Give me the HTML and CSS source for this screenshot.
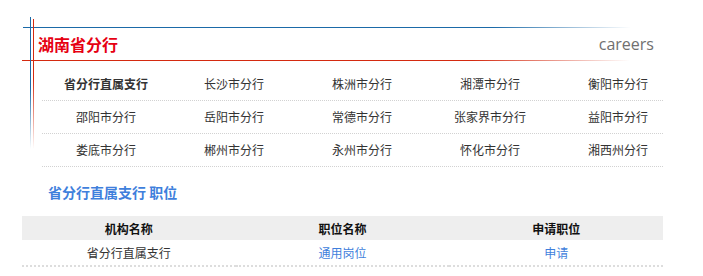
FILE: index.html
```html
<!DOCTYPE html>
<html lang="zh-CN">
<head>
  <meta charset="UTF-8" />
  <meta name="viewport" content="width=device-width, initial-scale=1.0" />
  <title>湖南省分行 – careers</title>
  <link rel="stylesheet" href="styles.css">
</head>
<body>
  <div class="wrap">
    <!-- cabecera con líneas -->
    <div class="head">
      <h1>湖南省分行</h1>
      <span class="en">careers</span>
    </div>

    <ul class="cities">
      <li class="row">
        <a href="#" class="cur">省分行直属支行</a>
        <a href="#">长沙市分行</a>
        <a href="#">株洲市分行</a>
        <a href="#">湘潭市分行</a>
        <a href="#">衡阳市分行</a>
      </li>
      <li class="row">
        <a href="#">邵阳市分行</a>
        <a href="#">岳阳市分行</a>
        <a href="#">常德市分行</a>
        <a href="#">张家界市分行</a>
        <a href="#">益阳市分行</a>
      </li>
      <li class="row">
        <a href="#">娄底市分行</a>
        <a href="#">郴州市分行</a>
        <a href="#">永州市分行</a>
        <a href="#">怀化市分行</a>
        <a href="#">湘西州分行</a>
      </li>
    </ul>

    <h2 class="sub">省分行直属支行 职位</h2>

    <table class="jobs">
      <thead>
        <tr>
          <th>机构名称</th>
          <th>职位名称</th>
          <th>申请职位</th>
        </tr>
      </thead>
      <tbody>
        <tr>
          <td>省分行直属支行</td>
          <td><a href="#">通用岗位</a></td>
          <td><a href="#">申请</a></td>
        </tr>
      </tbody>
    </table>
  </div>
</body>
</html>
```

FILE: styles.css
```css
:root {
  --rojo: #e60012;
  --azul-linea: #1b6aa8;
  --rojo-linea: #d42a10;
  --azul: #3f7fdc;
  --texto: #333;
  --punteado: #d2d2d2;
}

body {
  margin: 0;
  background: #fff;
  color: var(--texto);
  font-family: "Noto Sans CJK SC", "Open Sans", sans-serif;
  font-size: 12px;
}

a {
  color: inherit;
  text-decoration: none;
}

.wrap {
  width: 641px;
  padding-left: 22px;
}

.head {
  position: relative;
  margin-top: 27px;
  height: 34px;
  display: flex;
  align-items: center;
  justify-content: space-between;
  padding: 0 9px 0 16px;
  background:
    linear-gradient(to right, var(--azul-linea) 0, var(--azul-linea) 470px, rgba(27, 106, 168, 0) 608px) 1px 0 / 608px 1px no-repeat,
    linear-gradient(to right, var(--rojo-linea) 0, var(--rojo-linea) 450px, rgba(212, 42, 16, 0) 608px) 0 100% / 608px 1px no-repeat;
}

.head::before,
.head::after {
  content: "";
  position: absolute;
  width: 1px;
  height: 132px;
}

.head::before {
  left: 8px;
  top: -10px;
  background: linear-gradient(to bottom, var(--azul-linea) 0, var(--azul-linea) 70px, rgba(27, 106, 168, 0) 132px);
}

.head::after {
  left: 11px;
  top: -8px;
  background: linear-gradient(to bottom, var(--rojo-linea) 0, var(--rojo-linea) 60px, rgba(212, 42, 16, 0) 130px);
}

.head h1 {
  margin: 0;
  font-size: 16px;
  font-weight: bold;
  color: var(--rojo);
}

.head .en {
  font-family: "Open Sans", sans-serif;
  font-size: 16px;
  color: #707070;
}

.cities {
  list-style: none;
  margin: 7px 0 0 20px;
  padding: 0;
  width: 621px;
}

.cities .row {
  display: grid;
  grid-template-columns: repeat(5, 128px);
  height: 32px;
  align-items: center;
  border-bottom: 1px dotted var(--punteado);
}

.cities a {
  text-align: center;
  line-height: 32px;
}

.cities a.cur {
  font-weight: bold;
}

.sub {
  margin: 15px 0 0 26px;
  font-size: 14px;
  line-height: 20px;
  font-weight: bold;
  color: var(--azul);
}

.jobs {
  width: 641px;
  margin-top: 14px;
  border-collapse: collapse;
  table-layout: fixed;
}

.jobs th,
.jobs td {
  padding: 0;
  text-align: center;
  font-size: 12px;
}

.jobs th {
  height: 24px;
  background: #eee;
  color: #111;
  font-weight: bold;
}

.jobs td {
  height: 25px;
  border-bottom: 2px dotted #ddd;
}

.jobs td a {
  color: var(--azul);
}
```
